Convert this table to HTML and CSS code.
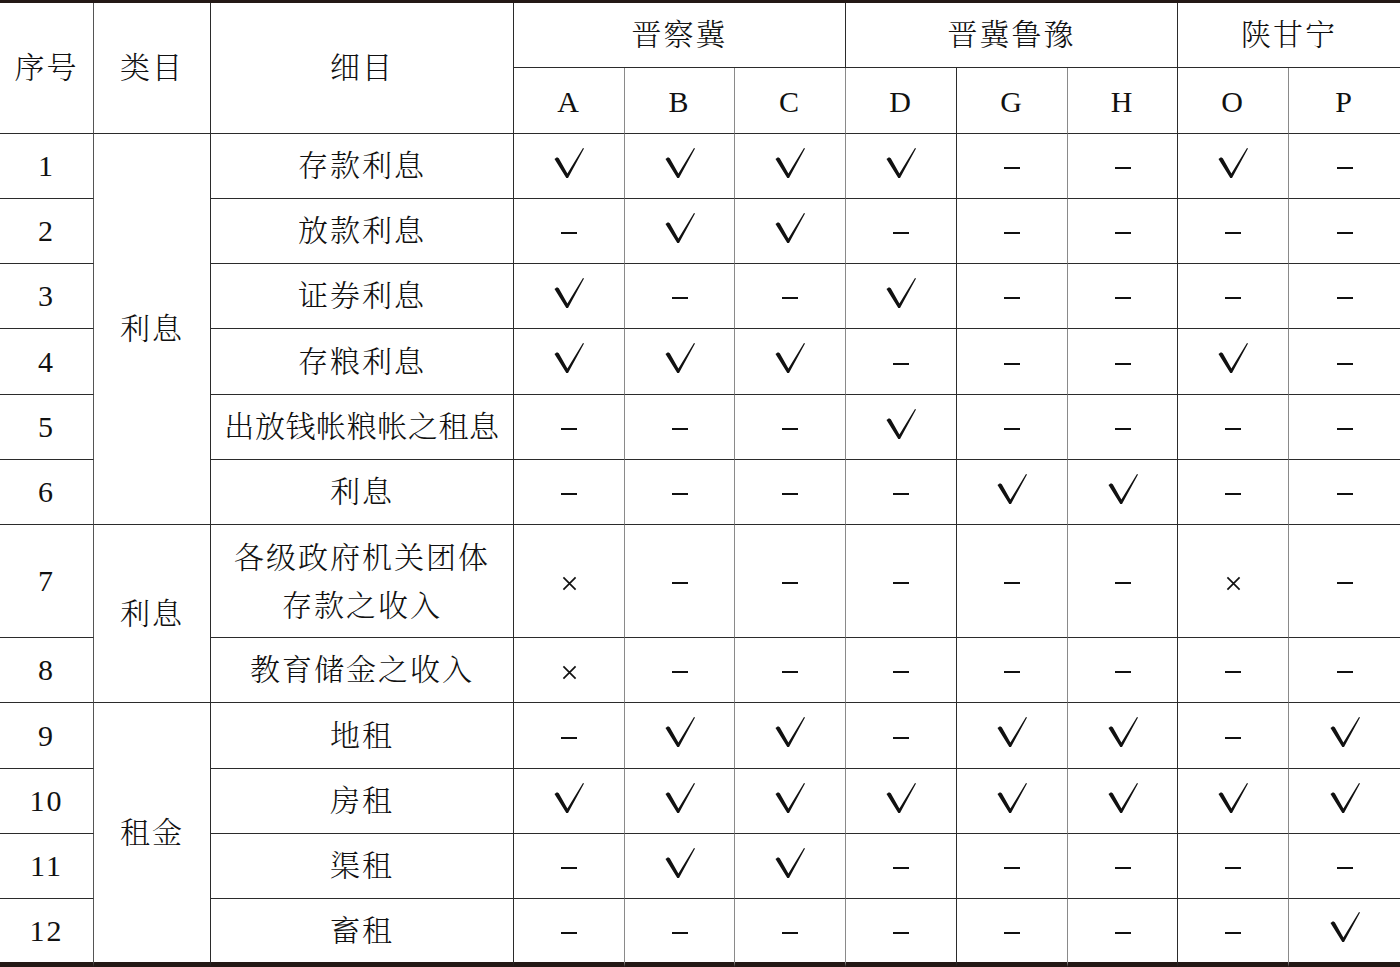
FILE: index.html
```html
<!DOCTYPE html>
<html lang="zh">
<head>
<meta charset="utf-8">
<title>收入细目表</title>
<link rel="stylesheet" href="styles.css">
</head>
<body>
<svg class="defs" width="0" height="0" aria-hidden="true">
  <defs>
    <symbol id="ck" viewBox="0 0 30 30"><polygon points="0.5,11 3,9.2 4.8,10.2 13.4,25.6 29,0 30,0.5 14,30 12.3,30"/></symbol>
    <symbol id="xx" viewBox="0 0 16 16"><path d="M1.5 1.5 L14.5 14.5 M14.5 1.5 L1.5 14.5" stroke="#111" stroke-width="1.8" fill="none"/></symbol>
  </defs>
</svg>
<table class="tbl">
  <colgroup>
    <col class="c-no"><col class="c-cat"><col class="c-item">
    <col class="c-a"><col class="c-b"><col class="c-c"><col class="c-d"><col class="c-g"><col class="c-h"><col class="c-o"><col class="c-p">
  </colgroup>
  <thead>
    <tr class="h1">
      <th rowspan="2" class="v1">序号</th>
      <th rowspan="2" class="v2">类目</th>
      <th rowspan="2" class="v2">细目</th>
      <th colspan="3" class="v2">晋察冀</th>
      <th colspan="3" class="v2">晋冀鲁豫</th>
      <th colspan="2" class="vlast">陕甘宁</th>
    </tr>
    <tr class="h2">
      <th class="g">A</th><th class="g">B</th><th class="g">C</th>
      <th class="d">D</th><th class="g">G</th><th class="d">H</th>
      <th class="g">O</th><th class="vlast">P</th>
    </tr>
  </thead>
  <tbody>
    <tr class="r">
      <td class="v1">1</td><td rowspan="6" class="v2">利息</td><td class="v2">存款利息</td>
      <td class="g"><svg class="ck"><use href="#ck"/></svg></td><td class="g"><svg class="ck"><use href="#ck"/></svg></td><td class="g"><svg class="ck"><use href="#ck"/></svg></td>
      <td class="d"><svg class="ck"><use href="#ck"/></svg></td><td class="g"><span class="dash"></span></td><td class="d"><span class="dash"></span></td>
      <td class="g"><svg class="ck"><use href="#ck"/></svg></td><td class="vlast"><span class="dash"></span></td>
    </tr>
    <tr class="r">
      <td class="v1">2</td><td class="v2">放款利息</td>
      <td class="g"><span class="dash"></span></td><td class="g"><svg class="ck"><use href="#ck"/></svg></td><td class="g"><svg class="ck"><use href="#ck"/></svg></td>
      <td class="d"><span class="dash"></span></td><td class="g"><span class="dash"></span></td><td class="d"><span class="dash"></span></td>
      <td class="g"><span class="dash"></span></td><td class="vlast"><span class="dash"></span></td>
    </tr>
    <tr class="r">
      <td class="v1">3</td><td class="v2">证券利息</td>
      <td class="g"><svg class="ck"><use href="#ck"/></svg></td><td class="g"><span class="dash"></span></td><td class="g"><span class="dash"></span></td>
      <td class="d"><svg class="ck"><use href="#ck"/></svg></td><td class="g"><span class="dash"></span></td><td class="d"><span class="dash"></span></td>
      <td class="g"><span class="dash"></span></td><td class="vlast"><span class="dash"></span></td>
    </tr>
    <tr class="r r66">
      <td class="v1">4</td><td class="v2">存粮利息</td>
      <td class="g"><svg class="ck"><use href="#ck"/></svg></td><td class="g"><svg class="ck"><use href="#ck"/></svg></td><td class="g"><svg class="ck"><use href="#ck"/></svg></td>
      <td class="d"><span class="dash"></span></td><td class="g"><span class="dash"></span></td><td class="d"><span class="dash"></span></td>
      <td class="g"><svg class="ck"><use href="#ck"/></svg></td><td class="vlast"><span class="dash"></span></td>
    </tr>
    <tr class="r">
      <td class="v1">5</td><td class="v2 tight">出放钱帐粮帐之租息</td>
      <td class="g"><span class="dash"></span></td><td class="g"><span class="dash"></span></td><td class="g"><span class="dash"></span></td>
      <td class="d"><svg class="ck"><use href="#ck"/></svg></td><td class="g"><span class="dash"></span></td><td class="d"><span class="dash"></span></td>
      <td class="g"><span class="dash"></span></td><td class="vlast"><span class="dash"></span></td>
    </tr>
    <tr class="r">
      <td class="v1">6</td><td class="v2">利息</td>
      <td class="g"><span class="dash"></span></td><td class="g"><span class="dash"></span></td><td class="g"><span class="dash"></span></td>
      <td class="d"><span class="dash"></span></td><td class="g"><svg class="ck"><use href="#ck"/></svg></td><td class="d"><svg class="ck"><use href="#ck"/></svg></td>
      <td class="g"><span class="dash"></span></td><td class="vlast"><span class="dash"></span></td>
    </tr>
    <tr class="r r113">
      <td class="v1">7</td><td rowspan="2" class="v2">利息</td><td class="v2 two">各级政府机关团体<br>存款之收入</td>
      <td class="g"><svg class="xx"><use href="#xx"/></svg></td><td class="g"><span class="dash"></span></td><td class="g"><span class="dash"></span></td>
      <td class="d"><span class="dash"></span></td><td class="g"><span class="dash"></span></td><td class="d"><span class="dash"></span></td>
      <td class="g"><svg class="xx"><use href="#xx"/></svg></td><td class="vlast"><span class="dash"></span></td>
    </tr>
    <tr class="r">
      <td class="v1">8</td><td class="v2">教育储金之收入</td>
      <td class="g"><svg class="xx"><use href="#xx"/></svg></td><td class="g"><span class="dash"></span></td><td class="g"><span class="dash"></span></td>
      <td class="d"><span class="dash"></span></td><td class="g"><span class="dash"></span></td><td class="d"><span class="dash"></span></td>
      <td class="g"><span class="dash"></span></td><td class="vlast"><span class="dash"></span></td>
    </tr>
    <tr class="r r66">
      <td class="v1">9</td><td rowspan="4" class="v2 last">租金</td><td class="v2">地租</td>
      <td class="g"><span class="dash"></span></td><td class="g"><svg class="ck"><use href="#ck"/></svg></td><td class="g"><svg class="ck"><use href="#ck"/></svg></td>
      <td class="d"><span class="dash"></span></td><td class="g"><svg class="ck"><use href="#ck"/></svg></td><td class="d"><svg class="ck"><use href="#ck"/></svg></td>
      <td class="g"><span class="dash"></span></td><td class="vlast"><svg class="ck"><use href="#ck"/></svg></td>
    </tr>
    <tr class="r">
      <td class="v1">10</td><td class="v2">房租</td>
      <td class="g"><svg class="ck"><use href="#ck"/></svg></td><td class="g"><svg class="ck"><use href="#ck"/></svg></td><td class="g"><svg class="ck"><use href="#ck"/></svg></td>
      <td class="d"><svg class="ck"><use href="#ck"/></svg></td><td class="g"><svg class="ck"><use href="#ck"/></svg></td><td class="d"><svg class="ck"><use href="#ck"/></svg></td>
      <td class="g"><svg class="ck"><use href="#ck"/></svg></td><td class="vlast"><svg class="ck"><use href="#ck"/></svg></td>
    </tr>
    <tr class="r">
      <td class="v1">11</td><td class="v2">渠租</td>
      <td class="g"><span class="dash"></span></td><td class="g"><svg class="ck"><use href="#ck"/></svg></td><td class="g"><svg class="ck"><use href="#ck"/></svg></td>
      <td class="d"><span class="dash"></span></td><td class="g"><span class="dash"></span></td><td class="d"><span class="dash"></span></td>
      <td class="g"><span class="dash"></span></td><td class="vlast"><span class="dash"></span></td>
    </tr>
    <tr class="r rlast">
      <td class="v1">12</td><td class="v2">畜租</td>
      <td class="g"><span class="dash"></span></td><td class="g"><span class="dash"></span></td><td class="g"><span class="dash"></span></td>
      <td class="d"><span class="dash"></span></td><td class="g"><span class="dash"></span></td><td class="d"><span class="dash"></span></td>
      <td class="g"><span class="dash"></span></td><td class="vlast"><svg class="ck"><use href="#ck"/></svg></td>
    </tr>
  </tbody>
</table>
</body>
</html>
```
FILE: styles.css
```css
html, body {
  margin: 0;
  padding: 0;
  background: #ffffff;
}
body {
  width: 1400px;
  height: 967px;
  overflow: hidden;
}
.defs {
  position: absolute;
  width: 0;
  height: 0;
}
.tbl {
  width: 1400px;
  table-layout: fixed;
  border-collapse: separate;
  border-spacing: 0;
  border-top: 3px solid #231815;
  font-family: "Liberation Serif", "Noto Serif CJK SC", "Noto Sans CJK SC", serif;
  font-size: 30px;
  font-weight: 300;
  color: #111;
}
.c-no { width: 94px; }
.c-cat { width: 117px; }
.c-item { width: 303px; }
.c-a { width: 111px; }
.c-b { width: 110px; }
.c-c { width: 111px; }
.c-d { width: 111px; }
.c-g { width: 111px; }
.c-h { width: 110px; }
.c-o { width: 111px; }
.c-p { width: 111px; }

.tbl th, .tbl td {
  padding: 0;
  text-align: center;
  vertical-align: middle;
  border-bottom: 1px solid #2b2b2b;
  border-right: 1px solid #2b2b2b;
  font-weight: 300;
  line-height: 1;
  box-sizing: border-box;
  letter-spacing: 2px;
  white-space: nowrap;
  overflow: hidden;
}
.tbl .v1 { border-right-color: #555; }
.tbl .v2 { border-right-color: #2b2b2b; }
.tbl .g { border-right-color: #8a8a8a; }
.tbl .d { border-right-color: #2b2b2b; }
.tbl .vlast { border-right: 0; }

.h1 { height: 65px; }
.h2 { height: 66px; }
.h2 th { padding-top: 2px; }
.r { height: 65px; }
.r66 { height: 66px; }
.r113 { height: 113px; }
.rlast { height: 68px; }
.tbl .rlast td, .tbl td.last { border-bottom: 5px solid #231815; }

.tbl .tight { letter-spacing: 0.6px; }
.tbl .two { line-height: 48px; white-space: normal; padding-top: 2px; }

.ck {
  display: block;
  width: 30px;
  height: 30px;
  margin: -7px auto 0;
  fill: #111;
}
.xx {
  display: block;
  width: 15px;
  height: 15px;
  margin: 4px auto 0;
}
.dash {
  display: block;
  width: 16px;
  height: 2px;
  margin: 4px auto 0;
  background: #111;
}
```
